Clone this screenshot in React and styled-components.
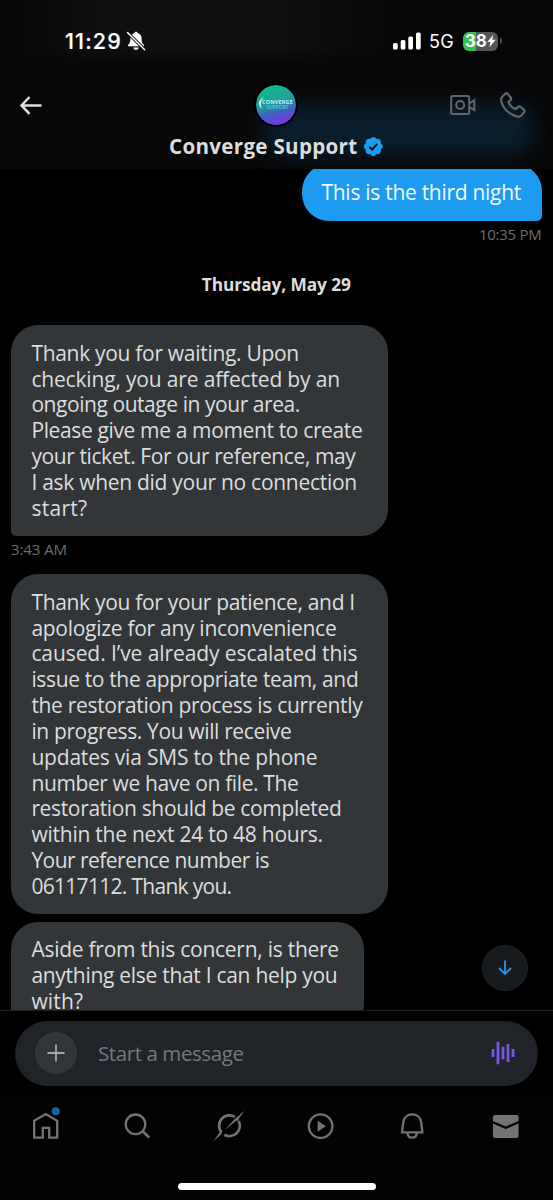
import React, { useLayoutEffect, useRef, useState } from "react";
import styled, { createGlobalStyle } from "styled-components";

const sans = `"Open Sans", "Noto Sans", sans-serif`;
const system = `Inter, "Liberation Sans", sans-serif`;

const GlobalStyle = createGlobalStyle`
  * { box-sizing: border-box; }
  body { margin: 0; background: #000; font-family: ${sans}; }
`;

const Screen = styled.main`
  width: 553px;
  height: 1200px;
  display: flex;
  flex-direction: column;
  overflow: hidden;
  background: #000;
  color: #dcdddd;
`;

const Header = styled.header`
  position: relative;
  flex: none;
  height: 169px;
  overflow: hidden;
  background: linear-gradient(90deg, #060606, #101012 20%, #101012 48%, #060606 74%) 0 0 / 100% 62px no-repeat, #070708;
  &::before {
    content: "";
    position: absolute;
    left: 0;
    right: 0;
    top: 48px;
    height: 32px;
    background: linear-gradient(rgba(7, 7, 8, 0), #070708 45%);
  }
  &::after {
    content: "";
    position: absolute;
    left: 262px;
    top: 104px;
    width: 272px;
    height: 52px;
    border-radius: 24px;
    background: #0a1e2d;
    filter: blur(10px);
  }
`;

const StatusBar = styled.div`
  position: relative;
  z-index: 1;
  display: flex;
  align-items: center;
  height: 82px;
  padding: 0 55px 0 65px;
  color: #fff;
  font-family: ${system};
`;

const Clock = styled.span`
  font-size: 21.5px;
  font-weight: 500;
  -webkit-text-stroke: 0.2px #fff;
`;

const SilentIcon = styled.svg`
  margin-left: 4px;
`;

const StatusIcons = styled.div`
  display: flex;
  align-items: center;
  gap: 8.5px;
  margin-left: auto;
  font-size: 18px;
`;

const Battery = styled.div`
  position: relative;
  display: flex;
  align-items: center;
  justify-content: center;
  width: 35.5px;
  height: 19px;
  border-radius: 6px;
  background: linear-gradient(90deg, #30c552 38%, #545557 38%);
  font-size: 17px;
  font-weight: 700;
  &::after {
    content: "";
    position: absolute;
    right: -3.5px;
    width: 2px;
    height: 6px;
    border-radius: 0 2px 2px 0;
    background: #48494a;
  }
`;

const TitleBar = styled.div`
  position: relative;
  z-index: 1;
  display: grid;
  grid-template-columns: 1fr 42px 1fr;
  align-items: center;
  height: 46px;
  padding: 0 27px 0 19px;
`;

const Actions = styled.div`
  display: flex;
  align-items: center;
  justify-content: flex-end;
  gap: 24px;
`;

const Avatar = styled.div`
  display: flex;
  flex-direction: column;
  align-items: center;
  justify-content: center;
  width: 44px;
  height: 44px;
  margin-left: 2px;
  border: 2px solid #000;
  border-radius: 50%;
  background: linear-gradient(165deg, #12b98d 12%, #219c9f 45%, #435fc4 66%, #7a35e6 90%);
  background-clip: padding-box;
`;

const LogoWord = styled.span`
  display: block;
  padding-left: 4px;
  color: ${(p) => p.$color};
  font: ${(p) => p.$weight} ${(p) => p.$size}px/5px ${sans};
`;

const LogoSwoosh = styled.svg`
  position: absolute;
  left: 258px;
  top: 14px;
`;

const NameRow = styled.div`
  position: relative;
  z-index: 1;
  display: flex;
  align-items: center;
  gap: 6px;
  height: 36px;
  padding-left: 169px;
  font-size: 20.6px;
  font-weight: 700;
`;

const Chat = styled.section`
  position: relative;
  flex: none;
  display: flex;
  flex-direction: column;
  align-items: flex-start;
  height: 841px;
  padding: 0 11.5px 0 11px;
  overflow: hidden;
`;

const Bubble = styled.div`
  flex: none;
  width: ${(p) => p.$width}px;
  margin-top: ${(p) => p.$gap || 0}px;
  padding: 15.4px 0 14.8px 20.4px;
  border-radius: 27px 27px 27px ${(p) => (p.$tail ? 5 : 27)}px;
  background: #333639;
  font-size: 21px;
  line-height: 25.83px;
`;

const SentBubble = styled(Bubble)`
  align-self: flex-end;
  margin-top: -5px;
  padding: 16px 0 15px 20px;
  border-radius: 27px 27px 5px 27px;
  background: #1d9bf0;
  color: #f2f9ff;
`;

const Stamp = styled.time`
  flex: none;
  display: block;
  height: 28px;
  color: #6b6e72;
  font-size: 15px;
  line-height: ${(p) => (p.$sent ? 27 : 26)}px;
  align-self: ${(p) => (p.$sent ? "flex-end" : "flex-start")};
`;

const DateLabel = styled.div`
  flex: none;
  display: flex;
  justify-content: center;
  align-self: stretch;
  margin: 21.5px 0 26px;
  font-size: 17.3px;
  font-weight: 700;
  line-height: 29px;
`;

const Line = styled.span`
  display: block;
  width: max-content;
  white-space: pre;
`;

const JumpButton = styled.button`
  position: absolute;
  left: 482px;
  top: 776px;
  display: grid;
  place-items: center;
  width: 46px;
  height: 46px;
  padding: 0;
  border: 1px solid #1f2428;
  border-radius: 50%;
  background: #171b1e;
`;

const Composer = styled.footer`
  flex: none;
  height: 85px;
  padding: 10px 15px 0;
  border-top: 1px solid #1d1f21;
`;

const Field = styled.div`
  display: flex;
  align-items: center;
  height: 65px;
  padding: 0 23.5px 1px 20px;
  border-radius: 33px;
  background: #202327;
  color: #76797d;
  font-size: 20.5px;
`;

const AddButton = styled.button`
  display: grid;
  place-items: center;
  width: 42px;
  height: 42px;
  margin-right: 21px;
  padding: 0;
  border: 0;
  border-radius: 50%;
  background: #333639;
`;

const VoiceIcon = styled.svg`
  margin-left: auto;
`;

const NavBar = styled.nav`
  position: relative;
  flex: none;
  display: grid;
  grid-template-columns: repeat(6, 1fr);
  justify-items: center;
  align-items: start;
  height: 105px;
  padding: 15px 2px 0 0;
  background: #030303;
`;

const HomeIndicator = styled.div`
  position: absolute;
  left: 178px;
  bottom: 10px;
  width: 198px;
  height: 7px;
  border-radius: 4px;
  background: #fff;
`;

/* Sets one line of text to a given width by adjusting its tracking. */
function Fit({ width, children }) {
  const ref = useRef(null);
  const [tracking, setTracking] = useState(0);
  useLayoutEffect(() => {
    const natural = ref.current.getBoundingClientRect().width;
    setTracking((width - natural) / children.length);
  }, []);
  return (
    <Line ref={ref} style={{ letterSpacing: `${tracking}px` }}>
      {children}
    </Line>
  );
}

const Lines = ({ rows }) => rows.map(([text, width]) => <Fit key={text} width={width}>{text}</Fit>);

const outage = [
  ["Thank you for waiting. Upon", 267.5],
  ["checking, you are affected by an", 308.5],
  ["ongoing outage in your area.", 268.5],
  ["Please give me a moment to create", 331],
  ["your ticket. For our reference, may", 324],
  ["I ask when did your no connection", 325.5],
  ["start?", 56],
];

const escalation = [
  ["Thank you for your patience, and I", 323.5],
  ["apologize for any inconvenience", 305],
  ["caused. I’ve already escalated this", 326],
  ["issue to the appropriate team, and", 327],
  ["the restoration process is currently", 331],
  ["in progress. You will receive", 260],
  ["updates via SMS to the phone", 286],
  ["number we have on file. The", 267],
  ["restoration should be completed", 310],
  ["within the next 24 to 48 hours.", 291.5],
  ["Your reference number is", 237.5],
  ["06117112. Thank you.", 200],
];

const followUp = [
  ["Aside from this concern, is there", 307.5],
  ["anything else that I can help you", 306],
  ["with?", 52],
];

const stroke = { fill: "none", stroke: "#737373", strokeWidth: 2.3 };

const NavIcon = ({ children }) => (
  <svg width="32" height="32" viewBox="0 0 32 32" overflow="visible">{children}</svg>
);

export default function App() {
  return (
    <Screen>
      <GlobalStyle />
      <Header>
        <StatusBar>
          <Clock><Fit width={57}>11:29</Fit></Clock>
          <SilentIcon width="20" height="20" viewBox="0 0 20 20">
            <path d="M10 .8c.8 0 1.400.5 1.500 1.200 2.700.600 4.100 2.700 4.100 5.400 0 4 .9 4.900 2 6 .8.800.400 1.900-.700 1.900H3.100c-1.100 0-1.500-1.100-.7-1.900 1.100-1.100 2-2 2-6 0-2.700 1.400-4.800 4.100-5.400C8.600 1.300 9.200.8 10 .8ZM7.300 16.400h5.400c-.2 1.600-1.300 2.500-2.700 2.500s-2.500-.9-2.700-2.500Z" fill="#fff" />
            <path d="M2.100 2.100 18.400 18.400" stroke="#101012" strokeWidth="3.400" />
            <path d="M1.500 1.500 18.700 18.700" stroke="#fff" strokeWidth="1.500" strokeLinecap="round" />
          </SilentIcon>
          <StatusIcons>
            <svg width="28" height="18" viewBox="0 0 28 18" fill="#fff">
              <rect x="0" y="11" width="4.700" height="6.500" rx="1.500" />
              <rect x="7.700" y="8" width="4.700" height="9.500" rx="1.500" />
              <rect x="15.300" y="4.500" width="4.700" height="13" rx="1.500" />
              <rect x="23" y="0.500" width="4.700" height="17" rx="1.500" />
            </svg>
            <Fit width={25}>5G</Fit>
            <Battery>
              <Fit width={22}>38</Fit>
              <svg width="9" height="14" viewBox="0 0 9 13"><path d="M6.300.300.300 7.500h3.200L2.400 12.700 8.700 5.300H5.300Z" fill="#fff" /></svg>
            </Battery>
          </StatusIcons>
        </StatusBar>
        <TitleBar>
          <svg width="23" height="20" viewBox="0 0 23 20" fill="none" stroke="#dededf" strokeWidth="2.500">
            <path d="M10.500 2 2.500 10.400l8 8.400M2.500 10.400H22.500" />
          </svg>
          <Avatar>
            <LogoWord $color="#c3f3ec" $weight={700} $size={5.4}><Fit width={31}>CONVERGE</Fit></LogoWord>
            <LogoWord $color="#45d6c4" $weight={600} $size={5}><Fit width={22}>SUPPORT</Fit></LogoWord>
          </Avatar>
          <LogoSwoosh width="8" height="16" viewBox="0 0 8 16">
            <path d="M6 1C-.5 4.500-.5 9.500 4 13 2 9 2.500 5 6 1Z" fill="#c9f5ec" />
          </LogoSwoosh>
          <Actions>
            <svg width="26" height="22" viewBox="0 0 26 22" fill="none" stroke="#5f676d" strokeWidth="2">
              <rect x="1.200" y="1.900" width="18" height="18.200" rx="1.500" />
              <circle cx="10.200" cy="11" r="4" />
              <path d="M19.400 9.500 24.300 6.200v10l-4.900-3.300" />
            </svg>
            <svg width="26" height="27" viewBox="0 0 26 27" fill="none" stroke="#5f676d" strokeWidth="2.200" strokeLinejoin="round">
              <path d="M2.300 4.800 5.200 1.900c.8-.8 1.800-.7 2.500 0l3 3.600c.7.800.6 1.700 0 2.400L8.500 10.100c1.200 3.200 3.600 5.600 7 7l2.500-2.200c.700-.7 1.600-.7 2.400-.1l3.700 3c.8.700.9 1.700.100 2.500l-2.700 3.100c-1.200 1.400-3.200 1.600-5 1C8.600 21.900 3.500 16.500 1.400 9.700c-.5-1.900-.4-3.500.9-4.900Z" />
            </svg>
          </Actions>
        </TitleBar>
        <NameRow>
          <Fit width={188.5}>Converge Support</Fit>
          <svg width="19" height="19" viewBox="2 2 20.500 20">
            <path d="M22.250 12c0-1.430-.88-2.670-2.190-3.340.46-1.390.2-2.900-.81-3.910s-2.520-1.270-3.910-.81c-.66-1.310-1.910-2.190-3.340-2.190s-2.670.88-3.330 2.190c-1.400-.46-2.910-.2-3.920.81s-1.260 2.520-.8 3.910c-1.310.67-2.200 1.910-2.200 3.340s.89 2.670 2.200 3.340c-.46 1.390-.21 2.900.8 3.910s2.520 1.260 3.910.81c.67 1.310 1.910 2.190 3.340 2.190s2.680-.88 3.340-2.190c1.390.45 2.900.2 3.910-.81s1.270-2.520.81-3.910c1.310-.67 2.190-1.910 2.190-3.340Z" fill="#1d9bf0" />
            <path d="m7.700 12.300 3 3 5.600-6" fill="none" stroke="#08121b" strokeWidth="2" />
          </svg>
        </NameRow>
      </Header>

      <Chat>
        <SentBubble $width={240}><Fit width={199.5}>This is the third night</Fit></SentBubble>
        <Stamp $sent><Fit width={62.5}>10:35 PM</Fit></Stamp>
        <DateLabel><Fit width={149}>Thursday, May 29</Fit></DateLabel>
        <Bubble $width={377} $tail><Lines rows={outage} /></Bubble>
        <Stamp><Fit width={56}>3:43 AM</Fit></Stamp>
        <Bubble $width={377} $gap={10}><Lines rows={escalation} /></Bubble>
        <Bubble $width={353} $gap={7.500} $tail><Lines rows={followUp} /></Bubble>
        <JumpButton aria-label="Jump to latest">
          <svg width="14" height="16" viewBox="0 0 14 16" fill="none" stroke="#2a97e6" strokeWidth="1.800">
            <path d="M7 .5v13.500M1 8l6 6 6-6" />
          </svg>
        </JumpButton>
      </Chat>

      <Composer>
        <Field>
          <AddButton aria-label="Add">
            <svg width="18" height="18" viewBox="0 0 18 18" stroke="#a5a6a7" strokeWidth="1.800"><path d="M9 .5v17M.5 9h17" /></svg>
          </AddButton>
          <Fit width={145.5}>Start a message</Fit>
          <VoiceIcon width="24" height="24" viewBox="0 0 24 24" stroke="#7856e8" strokeWidth="2.800">
            <path d="M2 8v8M7 .7v22.600M12 5.700v12.600M17 3v18M22 8v8" />
          </VoiceIcon>
        </Field>
      </Composer>

      <NavBar>
        <NavIcon>
          <path d="M4.200 10.800 15.800 4l11.400 6.800v16.800h-8V17.800h-6.400v9.800H4.200Z" {...stroke} />
          <circle cx="25.700" cy="1.300" r="4" fill="#17639b" />
        </NavIcon>
        <NavIcon>
          <circle cx="13.500" cy="14.300" r="9.800" {...stroke} />
          <path d="m20.600 21.200 6.600 6.300" {...stroke} strokeWidth="2.600" />
        </NavIcon>
        <NavIcon>
          <path d="M7.600 22.500A10.400 10.400 0 0 1 21 6.900" {...stroke} strokeWidth="2.700" />
          <path d="M10.300 24.700A10.400 10.400 0 0 0 24.700 11" {...stroke} strokeWidth="2.700" />
          <path d="M-1.300 32 6.200 21.800 8.200 23.300ZM10.800 19.900 20.400 9.200 30.800.800 25.600 7.500 23.800 11.300 22.500 10.600Z" fill="#737373" />
        </NavIcon>
        <NavIcon>
          <circle cx="15.600" cy="16.200" r="11.800" {...stroke} />
          <path d="m12.600 10.700 8.300 5.500-8.300 5.500Z" fill="#737373" />
        </NavIcon>
        <NavIcon>
          <path d="M5 22.300 6.200 12.500C6.700 7.500 10.500 4.400 15.200 4.400s8.500 3.100 9 8.100l1.200 9.800Z" {...stroke} />
          <path d="M10.300 22.500c.4 3.300 2.300 5.200 4.900 5.200s4.500-1.900 4.900-5.200" {...stroke} />
        </NavIcon>
        <NavIcon>
          <path d="M3.900 10.900V7c0-1.100.9-2 2-2h21.700c1.100 0 2 .9 2 2v3.900l-12.900 5.600ZM3.900 13.500l12.800 5.600 12.900-5.600v12.500c0 1.100-.9 2-2 2H5.900c-1.100 0-2-.9-2-2Z" fill="#737373" />
        </NavIcon>
        <HomeIndicator />
      </NavBar>
    </Screen>
  );
}
